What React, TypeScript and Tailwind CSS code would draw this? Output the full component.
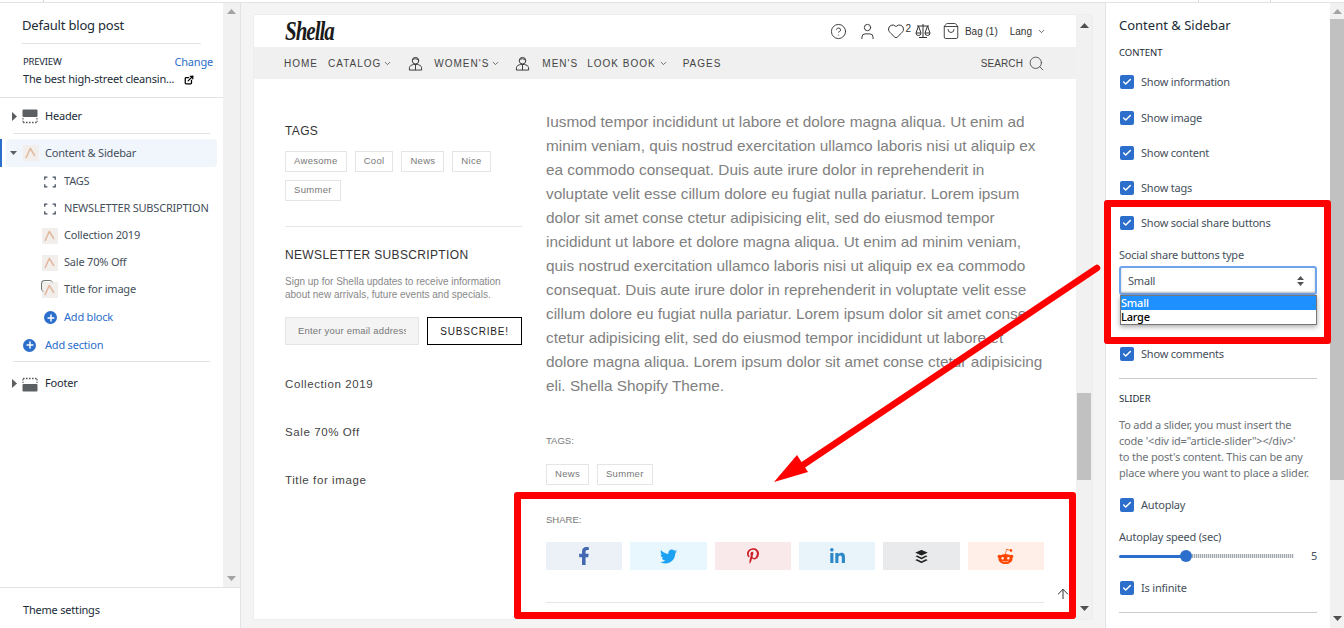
import { ArrowUp, Check, ChevronDown, CircleHelp, ExternalLink, Heart, Plus, Search, ShoppingBag, User } from 'lucide-react';
import { FaBuffer, FaFacebookF, FaLinkedinIn, FaPinterestP, FaRedditAlien, FaTwitter } from 'react-icons/fa';

const articleLines = [
  'Iusmod tempor incididunt ut labore et dolore magna aliqua. Ut enim ad',
  'minim veniam, quis nostrud exercitation ullamco laboris nisi ut aliquip ex',
  'ea commodo consequat. Duis aute irure dolor in reprehenderit in',
  'voluptate velit esse cillum dolore eu fugiat nulla pariatur. Lorem ipsum',
  'dolor sit amet conse ctetur adipisicing elit, sed do eiusmod tempor',
  'incididunt ut labore et dolore magna aliqua. Ut enim ad minim veniam,',
  'quis nostrud exercitation ullamco laboris nisi ut aliquip ex ea commodo',
  'consequat. Duis aute irure dolor in reprehenderit in voluptate velit esse',
  'cillum dolore eu fugiat nulla pariatur. Lorem ipsum dolor sit amet conse',
  'ctetur adipisicing elit, sed do eiusmod tempor incididunt ut labore et',
  'dolore magna aliqua. Lorem ipsum dolor sit amet conse ctetur adipisicing',
  'eli. Shella Shopify Theme.',
];

function Triangle({ dir, className }: { dir: 'up' | 'down' | 'right'; className: string }) {
  const points = dir === 'up' ? '0,6 10,6 5,0' : dir === 'down' ? '0,0 10,0 5,6' : '0,0 6,5 0,10';
  return (
    <svg viewBox={dir === 'right' ? '0 0 6 10' : '0 0 10 6'} preserveAspectRatio="none" className={className}>
      <polygon points={points} fill="currentColor" />
    </svg>
  );
}

function Thumb({ double }: { double?: boolean }) {
  return (
    <span className="relative block w-4 h-4 bg-[#f1eeec]">
      {double && <span className="absolute -left-px -top-[2px] w-3 h-3 rounded-sm border-t border-l border-[#6f7a72]" />}
      <svg viewBox="0 0 16 16" className="absolute inset-0 w-4 h-4">
        <path d="M3 13 L7 4 M7 3 L12 11" stroke="#e2b9a0" strokeWidth="1.6" fill="none" />
      </svg>
    </span>
  );
}

function BlockIcon() {
  return (
    <svg viewBox="0 0 16 16" className="ml-[2px] w-3 h-3 text-[#454f5b]">
      <path d="M1 5V1.5h3.5M11.5 1.5H15V5M15 11v3.5h-3.5M4.5 14.5H1V11" stroke="currentColor" strokeWidth="1.7" fill="none" />
    </svg>
  );
}

function LayoutIcon({ footer }: { footer?: boolean }) {
  return (
    <svg viewBox="0 0 16 16" className="w-4 h-4">
      {footer ? (
        <>
          <rect x="0.5" y="8" width="15" height="7.5" rx="1" fill="#5c5f62" />
          <path d="M1 2.5h14" stroke="#5c5f62" strokeWidth="1.4" strokeDasharray="1.6 1.4" />
          <path d="M1 3v4M15 3v4" stroke="#5c5f62" strokeWidth="1.2" strokeDasharray="1.4 1.4" />
        </>
      ) : (
        <>
          <rect x="0.5" y="0.5" width="15" height="7.5" rx="1" fill="#5c5f62" />
          <path d="M1 13.5h14" stroke="#5c5f62" strokeWidth="1.4" strokeDasharray="1.6 1.4" />
          <path d="M1 9v4M15 9v4" stroke="#5c5f62" strokeWidth="1.2" strokeDasharray="1.4 1.4" />
        </>
      )}
    </svg>
  );
}

function AddIcon({ className = '' }: { className?: string }) {
  return (
    <span className={`flex w-[13px] h-[13px] items-center justify-center rounded-full bg-[#2c6ecb] ${className}`}>
      <Plus className="w-[10px] h-[10px] text-white" strokeWidth={3.5} />
    </span>
  );
}

function ChildRow({ icon, label, blue, className = '' }: { icon: React.ReactNode; label: string; blue?: boolean; className?: string }) {
  return (
    <div className={`flex h-[27px] items-center ${className}`}>
      <span className="flex w-[22px] ml-[42px] justify-start">{icon}</span>
      <span className={blue ? 'text-[#2c6ecb]' : 'text-[#454f5b]'}>{label}</span>
    </div>
  );
}

function LeftPanel() {
  return (
    <aside className="flex flex-col w-[241px] h-full shrink-0 bg-white border-r border-[#e1e3e5] text-[11px] tracking-[-0.2px] font-['Noto_Sans',sans-serif]">
      <div className="flex flex-1 min-h-0">
        <div className="w-[223px] shrink-0">
          <div className="mx-[22px] h-[41px] pt-[6px] flex items-center border-b border-[#e1e3e5] text-[13px] text-[#212b36]">
            Default blog post
          </div>
          <div className="h-[54px] px-[23px] pt-[10px] border-b border-[#e1e3e5] text-[#212b36]">
            <div className="flex justify-between items-center h-[17px]">
              <span className="text-[9.5px]">PREVIEW</span>
              <span className="text-[#2c6ecb] -mr-[13px]">Change</span>
            </div>
            <div className="flex items-center h-[17px] whitespace-nowrap">
              <span className="w-[161px] text-[#212b36]">The best high-street cleansin...</span>
              <ExternalLink className="w-[10px] h-[10px] text-black" strokeWidth={3} />
            </div>
          </div>
          <div className="flex h-[36px] pt-[2px] items-center border-b border-[#e1e3e5] mx-[13px] text-[#212b36]">
            <Triangle dir="right" className="w-[5px] h-[9px] text-[#5c5f62] -ml-px mr-[5px]" />
            <span className="mr-[7px]"><LayoutIcon /></span>
            Header
          </div>
          <div className="relative flex h-[28px] mt-[5px] ml-[6px] mr-[6px] items-center rounded-sm bg-[#f1f6fd] text-[#454f5b]">
            <span className="absolute -left-[6px] top-0 w-[2px] h-full bg-[#2c6ecb]" />
            <Triangle dir="down" className="w-[7px] h-[4px] text-[#5c5f62] ml-[4px] mr-[6px]" />
            <span className="mr-[6px]"><Thumb /></span>
            Content & Sidebar
          </div>
          <div className="h-[1px]" />
          <ChildRow icon={<BlockIcon />} label="TAGS" />
          <ChildRow icon={<BlockIcon />} label="NEWSLETTER SUBSCRIPTION" />
          <ChildRow icon={<Thumb />} label="Collection 2019" />
          <ChildRow icon={<Thumb />} label="Sale 70% Off" />
          <ChildRow icon={<Thumb double />} label="Title for image" />
          <ChildRow icon={<AddIcon className="ml-[2px]" />} label="Add block" blue className="mt-px" />
          <div className="flex h-[31px] items-center border-b border-[#e1e3e5] mx-[13px] pb-[2px] text-[#2c6ecb]">
            <span className="w-[22px] ml-[10px]"><AddIcon /></span>
            Add section
          </div>
          <div className="flex h-[41px] pt-[2px] items-center mx-[13px] text-[#212b36]">
            <Triangle dir="right" className="w-[5px] h-[9px] text-[#5c5f62] -ml-px mr-[5px]" />
            <span className="mr-[7px]"><LayoutIcon footer /></span>
            Footer
          </div>
        </div>
        <div className="flex flex-1 flex-col items-center justify-between bg-[#f1f1f1] pt-[6px] pb-[6px]">
          <Triangle dir="up" className="w-[9px] h-[5px] text-[#a3a3a3]" />
          <Triangle dir="down" className="w-[9px] h-[5px] text-[#a3a3a3]" />
        </div>
      </div>
      <div className="h-[41px] pt-[4px] flex items-center px-[23px] border-t border-[#e1e3e5] text-[#212b36]">Theme settings</div>
    </aside>
  );
}

function Tag({ label }: { label: string }) {
  return (
    <span className="inline-flex h-[21px] items-center px-2 border border-[#e5e5e5] text-[#777] text-[9.5px] tracking-[0.3px]">
      {label}
    </span>
  );
}

function PersonIcon() {
  return (
    <svg viewBox="0 0 16 16" className="w-[15px] h-[15px]" fill="none" stroke="#333" strokeWidth="1">
      <circle cx="8" cy="5" r="3.5" />
      <path d="M4.5 4.5 Q8 1 11.5 5" />
      <path d="M1.5 15v-2.5c0-2 2.5-3 4.5-3.5h4c2 .5 4.5 1.5 4.5 3.5V15z" />
      <path d="M8 9.5V15" />
    </svg>
  );
}

function BalanceIcon() {
  return (
    <svg viewBox="0 0 16 16" className="w-4 h-4" fill="none" stroke="#333" strokeWidth="1">
      <path d="M8 1v13M4 14.5h8M2 3h12" />
      <path d="M3.5 3 1 10h5zM12.5 3 10 10h5z" />
      <path d="M1 10a2.5 2.5 0 0 0 5 0M10 10a2.5 2.5 0 0 0 5 0" />
    </svg>
  );
}

function Preview() {
  return (
    <div className="relative flex w-[838px] h-[604px] font-['Liberation_Sans',sans-serif] shadow-[0_0_1px_#ccc]">
      <div className="w-[822px] bg-white overflow-hidden">
        <div className="flex h-[32px] items-center pl-[31px] pr-[30px] text-[#333]">
          <span className="origin-left text-[21px] leading-none italic font-bold font-['Liberation_Serif',serif] text-[#1a1a1a] tracking-[-1px] scale-y-125">Shella</span>
          <div className="flex items-center ml-auto">
            <CircleHelp className="w-[17px] h-[17px]" strokeWidth={1.3} />
            <User className="ml-[11px] w-[19px] h-[19px]" strokeWidth={1.2} />
            <Heart className="ml-[10px] w-[18px] h-[18px]" strokeWidth={1.3} />
            <span className="text-[10px] -mt-[6px]">2</span>
            <span className="ml-[4px]"><BalanceIcon /></span>
            <ShoppingBag className="ml-[11px] w-[18px] h-[18px]" strokeWidth={1.2} />
            <span className="ml-[5px] text-[10px]">Bag (1)</span>
            <span className="ml-[12px] text-[10px]">Lang</span>
            <ChevronDown className="ml-[5px] w-[9px] h-[9px]" strokeWidth={2} />
          </div>
        </div>
        <div className="flex h-[32px] items-center pl-[30px] pr-[31px] bg-[#f0f0f0] text-[#444] text-[10px] tracking-[1px]">
          <span>HOME</span>
          <span className="ml-[10px]">CATALOG</span>
          <ChevronDown className="ml-[2px] w-[9px] h-[9px]" strokeWidth={2} />
          <span className="ml-[16px]"><PersonIcon /></span>
          <span className="ml-[11px]">WOMEN'S</span>
          <ChevronDown className="ml-[2px] w-[9px] h-[9px]" strokeWidth={2} />
          <span className="ml-[15px]"><PersonIcon /></span>
          <span className="ml-[12px]">MEN'S</span>
          <span className="ml-[9px]">LOOK BOOK</span>
          <ChevronDown className="ml-[3px] w-[9px] h-[9px]" strokeWidth={2} />
          <span className="ml-[15px]">PAGES</span>
          <span className="ml-auto tracking-[0.1px]">SEARCH</span>
          <Search className="ml-[5px] w-[17px] h-[17px]" strokeWidth={1.2} />
        </div>
        <div className="flex pl-[31px] pr-[32px]">
          <div className="w-[237px] shrink-0 pt-[44px]">
            <div className="text-[12px] leading-4 tracking-[0.35px] text-[#333]">TAGS</div>
            <div className="flex flex-wrap gap-x-2 gap-y-2 mt-[12px]">
              <Tag label="Awesome" />
              <Tag label="Cool" />
              <Tag label="News" />
              <Tag label="Nice" />
              <Tag label="Summer" />
            </div>
            <div className="h-px bg-[#e5e5e5] mt-[25px]" />
            <div className="mt-[20px] text-[12px] leading-4 tracking-[0.35px] text-[#333]">NEWSLETTER SUBSCRIPTION</div>
            <p className="mt-[12px] text-[10px] leading-[13px] text-[#888]">
              Sign up for Shella updates to receive information
              <br />
              about new arrivals, future events and specials.
            </p>
            <div className="flex mt-[16px] gap-2">
              <div className="flex w-[134px] h-[28px] items-center pl-3 pr-3 bg-[#f4f4f4] border border-[#e5e5e5] text-[9.5px] tracking-[0.2px] text-[#777]">
                <span className="block overflow-hidden whitespace-nowrap">Enter your email address</span>
              </div>
              <div className="flex flex-1 h-[28px] items-center justify-center border border-black text-[10px] tracking-[0.8px] text-[#222]">
                SUBSCRIBE!
              </div>
            </div>
            <div className="mt-[31px] text-[11.5px] leading-4 tracking-[0.6px] text-[#444]">Collection 2019</div>
            <div className="mt-[32px] text-[11.5px] leading-4 tracking-[0.6px] text-[#444]">Sale 70% Off</div>
            <div className="mt-[32px] text-[11.5px] leading-4 tracking-[0.6px] text-[#444]">Title for image</div>
          </div>
          <div className="w-[498px] ml-[24px] pt-[31px]">
            <div className="text-[15.35px] leading-6 text-[#808080] whitespace-nowrap">
              {articleLines.map((line) => (
                <div key={line}>{line}</div>
              ))}
            </div>
            <div className="mt-[37px] text-[9.5px] leading-3 text-[#777]">TAGS:</div>
            <div className="flex gap-2 mt-[17px]">
              <Tag label="News" />
              <Tag label="Summer" />
            </div>
            <div className="mt-[29px] text-[9.5px] leading-3 text-[#777]">SHARE:</div>
            <div className="flex gap-2 mt-[16px]">
              <div className="flex flex-1 h-[28px] items-center justify-center bg-[#ecf0f7] text-[#4267b2]"><FaFacebookF className="w-[18px] h-[18px]" /></div>
              <div className="flex flex-1 h-[28px] items-center justify-center bg-[#e8f6fe] text-[#1da1f2]"><FaTwitter className="w-[17px] h-[17px]" /></div>
              <div className="flex flex-1 h-[28px] items-center justify-center bg-[#f9e9ea] text-[#cb2027]"><FaPinterestP className="w-4 h-4" /></div>
              <div className="flex flex-1 h-[28px] items-center justify-center bg-[#e9f4fa] text-[#2b87c6]"><FaLinkedinIn className="w-[17px] h-[17px]" /></div>
              <div className="flex flex-1 h-[28px] items-center justify-center bg-[#e9eaeb] text-[#222]"><FaBuffer className="w-[15px] h-[15px]" /></div>
              <div className="flex flex-1 h-[28px] items-center justify-center bg-[#ffefe8] text-[#ff4500]"><FaRedditAlien className="w-[17px] h-[17px]" /></div>
            </div>
            <div className="h-px bg-[#e5e5e5] mt-[32px]" />
          </div>
        </div>
      </div>
      <ArrowUp className="absolute left-[801px] top-[570px] w-4 h-[18px] text-[#333]" strokeWidth={1.5} />
      <div className="flex flex-col items-center flex-1 bg-[#f1f1f1] pt-[8px] pb-[8px]">
        <Triangle dir="up" className="w-[9px] h-[5px] text-[#505050]" />
        <div className="w-[14px] h-[87px] bg-[#c1c1c1] mt-[365px]" />
        <div className="flex-1" />
        <Triangle dir="down" className="w-[9px] h-[5px] text-[#505050]" />
      </div>
    </div>
  );
}

function CheckRow({ label, className }: { label: string; className: string }) {
  return (
    <div className={`flex items-center ${className}`}>
      <span className="flex w-[14px] h-[14px] ml-px items-center justify-center rounded-[2px] bg-[#2c6ecb]">
        <Check className="w-[10px] h-[10px] text-white" strokeWidth={3.5} />
      </span>
      <span className="ml-[7px] text-[#454f5b]">{label}</span>
    </div>
  );
}

function RightPanel() {
  return (
    <aside className="flex w-[239px] shrink-0 h-full bg-white border-l border-[#e1e3e5] text-[11px] tracking-[-0.2px] font-['Noto_Sans',sans-serif]">
      <div className="w-[224px] shrink-0 px-[13px] pt-[14px] text-[#212b36]">
        <div className="h-[16px] leading-4 text-[13px] tracking-normal">Content & Sidebar</div>
        <div className="h-[14px] leading-[14px] mt-[13px] text-[9.5px] tracking-normal">CONTENT</div>
        <CheckRow label="Show information" className="h-[16px] mt-[14px]" />
        <CheckRow label="Show image" className="h-[16px] mt-[20px]" />
        <CheckRow label="Show content" className="h-[16px] mt-[19px]" />
        <CheckRow label="Show tags" className="h-[16px] mt-[19px]" />
        <CheckRow label="Show social share buttons" className="h-[16px] mt-[19px]" />
        <div className="h-[16px] leading-4 mt-[16px] text-[#454f5b]">Social share buttons type</div>
        <div className="relative mt-[3px]">
          <div className="flex h-[29px] pt-px items-center justify-between pl-[7px] pr-[11px] rounded-[3px] border-[2px] border-[#6ea4ec] shadow-[inset_0_-1px_2px_#bbb] text-[#454f5b]">
            <span>Small</span>
            <span className="flex flex-col gap-[2px]">
              <Triangle dir="up" className="w-[7px] h-[4px] text-[#555]" />
              <Triangle dir="down" className="w-[7px] h-[4px] text-[#555]" />
            </span>
          </div>
          <div className="absolute left-px top-[29px] w-[197px] h-[30px] border border-[#767676] bg-white text-black shadow-[0_2px_5px_#0005] font-medium leading-[13px]">
            <div className="h-[14px] bg-[#1e90ff] text-white">Small</div>
            <div className="h-[14px]">Large</div>
          </div>
        </div>
        <CheckRow label="Show comments" className="h-[16px] mt-[51px]" />
        <div className="h-px bg-[#c9cccf] mt-[16px]" />
        <div className="h-[14px] leading-[14px] mt-[13px] text-[9.5px] tracking-normal">SLIDER</div>
        <p className="mt-[11px] leading-4 text-[#6d7175] whitespace-nowrap">
          To add a slider, you must insert the
          <br />
          code '&lt;div id="article-slider"&gt;&lt;/div&gt;'
          <br />
          to the post's content. This can be any
          <br />
          place where you want to place a slider.
        </p>
        <CheckRow label="Autoplay" className="h-[16px] mt-[16px]" />
        <div className="h-[16px] leading-4 mt-[16px] text-[#454f5b]">Autoplay speed (sec)</div>
        <div className="flex h-[14px] items-center mt-[4px] text-[#454f5b]">
          <div className="h-[3px] w-[62px] rounded-l-full bg-[#2c6ecb]" />
          <div className="w-[12px] h-[12px] -ml-px rounded-full bg-[#2c6ecb]" />
          <div className="h-[4px] w-[102px] bg-[repeating-linear-gradient(90deg,#a5a9ad_0,#a5a9ad_1px,#e5e6e7_1px,#e5e6e7_2px)]" />
          <span className="ml-auto">5</span>
        </div>
        <CheckRow label="Is infinite" className="h-[16px] mt-[17px]" />
        <div className="h-px bg-[#c9cccf] mt-[16px]" />
      </div>
      <div className="flex flex-1 flex-col items-center bg-[#f1f1f1]">
        <div className="h-[16px] flex items-center"><Triangle dir="up" className="w-[9px] h-[5px] text-[#a3a3a3]" /></div>
        <div className="w-full h-[461px] bg-[#c1c1c1]" />
        <div className="flex-1" />
        <div className="h-[19px] flex items-center"><Triangle dir="down" className="w-[9px] h-[5px] text-[#505050]" /></div>
      </div>
    </aside>
  );
}

export default function App() {
  return (
    <div className="relative flex flex-col w-[1344px] h-[628px] overflow-hidden bg-[#f4f4f4]">
      <div className="flex h-[3px] shrink-0 bg-white border-b border-[#e1e3e5]">
        <div className="w-[44px] border-r border-[#d8d8d8]" />
        <div className="w-[1155px] border-r border-[#d8d8d8]" />
        <div className="w-[72px] border-r border-[#d8d8d8]" />
      </div>
      <div className="flex flex-1 min-h-0">
        <LeftPanel />
        <main className="flex-1 pl-[13px] pt-[12px]">
          <Preview />
        </main>
        <RightPanel />
      </div>

      {/* red annotations drawn over the screenshot */}
      <div className="absolute left-[514px] top-[492px] w-[562px] h-[127px] border-[7px] border-[#ff0000] rounded-[3px]" />
      <div className="absolute left-[1104px] top-[200px] w-[227px] h-[144px] border-[7px] border-[#ff0000] rounded-[3px]" />
      <svg viewBox="0 0 1344 628" className="absolute inset-0 w-[1344px] h-[628px] pointer-events-none">
        <path d="M1097 268 L803 465" stroke="#ff0000" strokeWidth="6.5" strokeLinecap="round" fill="none" />
        <polygon points="774,482 797,455 808,472" fill="#ff0000" />
      </svg>
    </div>
  );
}
